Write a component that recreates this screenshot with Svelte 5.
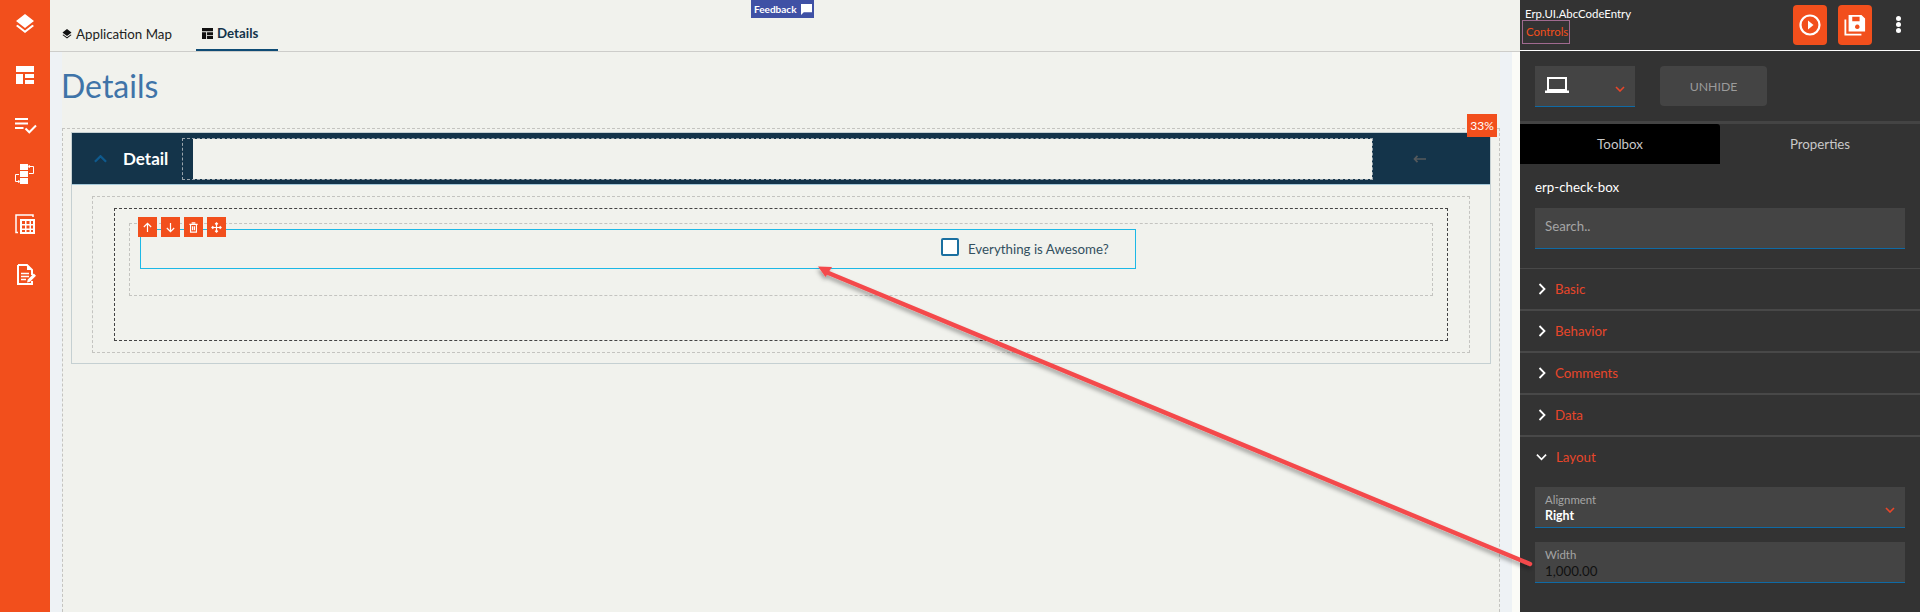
<script lang="ts">
	const sections = ['Basic', 'Behavior', 'Comments', 'Data'];
	const layers =
		'M11.99 18.54l-7.37-5.73L3 14.07l9 7 9-7-1.63-1.27-7.38 5.74zM12 16l7.36-5.73L21 9l-9-7-9 7 1.63 1.27L12 16z';
</script>

<div class="page">
	<nav class="rail">
		<svg class="r1" viewBox="0 0 24 24"><path d={layers} /></svg>
		<svg class="r2" viewBox="0 0 18 18">
			<path d="M0 0h18v6H0zM0 8h7v10H0zM9 8h9v4H9zM9 14h9v4H9z" />
		</svg>
		<svg class="r3" viewBox="0 0 22 16">
			<path d="M0 0h13v2H0zM0 4.500h13v2H0zM0 9h8.500v2H0z" />
			<path d="M10.500 10.500l3.800 3.800L21 7.500" fill="none" stroke="#fff" stroke-width="2" />
		</svg>
		<svg class="r4" viewBox="0 0 20 20">
			<path d="M5 0h8v6H5zM5 7h8v6H5zM5 14h8v6H5z" />
			<path d="M14 2.500h4.500v7H14M4 10.500H.5v7H4" fill="none" stroke="#fff" stroke-width="1" />
			<path d="M14.500 1v3l-1.500-1.500zM3.500 16v3l1.500-1.500z" stroke="#fff" stroke-width=".5" />
		</svg>
		<svg class="r5" viewBox="0 0 20 20">
			<path d="M5 5h15v15H5z M7 7v3h3V7z M11.500 7v3h3V7z M16 7v3h2V7z M7 11.500v3h3v-3z M11.500 11.500v3h3v-3z M16 11.500v3h2v-3z M7 16v2h3v-2z M11.500 16v2h3v-2z M16 16v2h2v-2z" fill-rule="evenodd" />
			<path d="M3 18.500H1V1h17v2" fill="none" stroke="#fff" stroke-width="1.500" />
		</svg>
		<svg class="r6" viewBox="0 0 19 21">
			<path d="M1 1h9l5 5v5M15 17v3H1V1" fill="none" stroke="#fff" stroke-width="2" />
			<path d="M10 1v5h5z" />
			<path d="M4 9.500h8M4 12.500h8M4 15.500h5" stroke="#fff" stroke-width="1.600" />
			<path d="M10 18.500l.8-3 6-6 2.200 2.200-6 6z" />
		</svg>
	</nav>

	<main class="main">
		<header class="tabs">
			<a class="tab first">
				<svg class="tab-ic" viewBox="0 0 24 24"><path d={layers} /></svg>
				Application Map
			</a>
			<a class="tab active">
				<svg class="tab-ic grid-ic" viewBox="0 0 12 12">
					<path d="M0 0h12v3.500H0zM0 4.500h4.500V12H0zM5.500 4.500H12v3H5.500zM5.500 8.500H12V12H5.500z" />
				</svg>
				Details
			</a>
			<div class="feedback">
				Feedback
				<svg viewBox="0 0 12 12"><path d="M0 0h12v9H3L0 12z" /></svg>
			</div>
		</header>

		<div class="body">
			<div class="strip"></div>
			<section class="content">
				<h1>Details</h1>
				<div class="outer">
					<span class="pct">33%</span>
					<div class="card">
						<div class="card-head">
							<svg class="chev-up" viewBox="0 0 14 8"><path d="M1 7l6-6 6 6" /></svg>
							<span class="card-title">Detail</span>
							<div class="head-slot"><div class="head-fill"></div></div>
							<svg class="back" viewBox="0 0 13 8"><path d="M13 4H2M4.500 .8L1.500 4l3 3.200" /></svg>
						</div>
						<div class="card-body">
							<div class="dash-a">
								<div class="dash-b">
									<div class="dash-c">
										<div class="selected">
											<div class="tools">
												<span class="tool">
													<svg viewBox="0 0 12 12"><path d="M6 11V2M2 5.500L6 1.500l4 4" /></svg>
												</span>
												<span class="tool">
													<svg viewBox="0 0 12 12"><path d="M6 1v9M2 6.500l4 4 4-4" /></svg>
												</span>
												<span class="tool">
													<svg viewBox="0 0 12 12">
														<path d="M1.500 2.500h9M4 1h4M2.800 2.500v8.500h6.400V2.500M5 4.500V9M7 4.500V9" />
													</svg>
												</span>
												<span class="tool">
													<svg viewBox="0 0 12 12">
														<path d="M6 1v10M1 6h10M4.500 2.500L6 1l1.500 1.500M4.500 9.500L6 11l1.500-1.500M2.500 4.500L1 6l1.500 1.500M9.500 4.500L11 6 9.500 7.500" />
													</svg>
												</span>
											</div>
											<label class="check">
												<span class="box"></span>
												<span class="check-text">Everything is Awesome?</span>
											</label>
										</div>
									</div>
								</div>
							</div>
						</div>
					</div>
				</div>
			</section>
			<div class="strip end"></div>
			<div class="gutter"></div>
		</div>
	</main>

	<aside class="panel">
		<div class="top">
			<div class="crumbs">
				<div class="crumb-name">Erp.UI.AbcCodeEntry</div>
				<div class="crumb-link">Controls</div>
			</div>
			<button class="act">
				<svg viewBox="0 0 22 22">
					<circle cx="11" cy="11" r="9.500" fill="none" stroke="#fff" stroke-width="2.200" />
					<path d="M9 6.500l5.500 4.500L9 15.500z" fill="#fff" />
				</svg>
			</button>
			<button class="act">
				<svg viewBox="0 0 24 24">
					<path d="M5 1h14l4 4v14H5z M9 3v5h8V3z M14.500 11.500a2.500 2.500 0 1 0 .01 0z" fill="#fff" fill-rule="evenodd" />
					<path d="M1.500 6v16.500H19" fill="none" stroke="#fff" stroke-width="2" />
				</svg>
			</button>
			<span class="kebab"><i></i><i></i><i></i></span>
		</div>

		<div class="tools-row">
			<div class="device">
				<svg class="laptop" viewBox="0 0 24 16">
					<path d="M3 1h18v12H3z" fill="none" stroke="#fff" stroke-width="2" />
					<path d="M0 13.500h24V16H0z" fill="#fff" />
				</svg>
				<svg class="mini-chev" viewBox="0 0 10 6"><path d="M1 1l4 4 4-4" /></svg>
			</div>
			<button class="unhide">UNHIDE</button>
		</div>

		<div class="panel-tabs">
			<div class="ptab on">Toolbox</div>
			<div class="ptab">Properties</div>
		</div>

		<div class="picked">erp-check-box</div>
		<div class="search">Search..</div>

		<div class="rows">
			{#each sections as s}
				<div class="row">
					<svg class="arrow" viewBox="0 0 8 12"><path d="M1.500 1l5 5-5 5" /></svg>
					<span>{s}</span>
				</div>
			{/each}
			<div class="row open">
				<svg class="arrow down" viewBox="0 0 12 8"><path d="M1 1.500l5 5 5-5" /></svg>
				<span>Layout</span>
			</div>
		</div>

		<div class="field">
			<small>Alignment</small>
			<b>Right</b>
			<svg class="mini-chev" viewBox="0 0 10 6"><path d="M1 1l4 4 4-4" /></svg>
		</div>
		<div class="field">
			<small>Width</small>
			<em>1,000.00</em>
		</div>
	</aside>

	<svg class="callout" viewBox="0 0 1920 612">
		<defs>
			<filter id="sh" x="-5%" y="-5%" width="110%" height="115%">
				<feDropShadow dx="-1" dy="3" stdDeviation="2" flood-color="#000" flood-opacity="0.35" />
			</filter>
		</defs>
		<g filter="url(#sh)">
			<path d="M1530 564L826 272" stroke="#f44a4c" stroke-width="4.500" stroke-linecap="round" />
			<path d="M818 266.500L832 267L825.500 277z" fill="#f44a4c" />
		</g>
	</svg>
</div>

<style>
	:global(body) {
		margin: 0;
		font-family: Lato, 'Liberation Sans', sans-serif;
	}
	.page {
		position: relative;
		display: grid;
		grid-template-columns: 50px 1fr 400px;
		width: 1920px;
		height: 612px;
		overflow: hidden;
		background: #f1f2ed;
	}
	.rail {
		background: #f24f1c;
		display: flex;
		flex-direction: column;
		align-items: center;
	}
	.rail svg {
		fill: #fff;
		flex: none;
	}
	.r1 {
		width: 24px;
		height: 24px;
		margin-top: 12px;
	}
	.r2 {
		width: 18px;
		height: 18px;
		margin-top: 30px;
	}
	.r3 {
		width: 22px;
		height: 16px;
		margin-top: 34px;
		margin-left: 2px;
	}
	.r4 {
		width: 20px;
		height: 20px;
		margin-top: 30px;
	}
	.r5 {
		width: 20px;
		height: 20px;
		margin-top: 30px;
	}
	.r6 {
		width: 19px;
		height: 21px;
		margin-top: 30px;
		margin-left: 2px;
	}
	.main {
		display: flex;
		flex-direction: column;
		min-width: 0;
	}
	.tabs {
		position: relative;
		flex: none;
		display: flex;
		align-items: flex-end;
		height: 51px;
		border-bottom: 1px solid #cdcdca;
		padding-left: 11px;
	}
	.tab {
		display: flex;
		align-items: center;
		gap: 3px;
		height: 34px;
		font-size: 13.3px;
		color: #222;
		box-sizing: border-box;
		padding-bottom: 1px;
	}
	.tab.first {
		width: 135px;
	}
	.tab.active {
		width: 82px;
		padding-left: 6px;
		color: #14344a;
		font-weight: 700;
		border-bottom: 2px solid #0f4c75;
		padding-bottom: 0;
	}
	.tab-ic {
		width: 12px;
		height: 12px;
		fill: #111;
	}
	.grid-ic {
		width: 11px;
		height: 11px;
		margin-right: 1px;
	}
	.feedback {
		position: absolute;
		left: 701px;
		top: 0;
		width: 63px;
		height: 18px;
		background: #3f51a5;
		color: #fff;
		font-size: 10px;
		font-weight: 700;
		display: flex;
		align-items: center;
		gap: 5px;
		padding-left: 3px;
		box-sizing: border-box;
	}
	.feedback svg {
		width: 11px;
		height: 11px;
		fill: #fff;
	}
	.body {
		flex: 1;
		display: flex;
		min-height: 0;
	}
	.strip {
		flex: none;
		width: 12px;
		background: #eef2f5;
	}
	.gutter {
		flex: none;
		width: 8px;
		background: #fbfbf7;
	}
	.content {
		flex: 1;
		min-width: 0;
		display: flex;
		flex-direction: column;
	}
	h1 {
		margin: 0 0 0 -1px;
		height: 76px;
		flex: none;
		box-sizing: border-box;
		padding-top: 15px;
		font-size: 32px;
		line-height: 38px;
		font-weight: 400;
		color: #3f74a8;
	}
	.outer {
		position: relative;
		flex: 1;
		margin-bottom: -20px;
		border: 1px dashed #c4c4c0;
		padding: 3px 8px 0 8px;
		box-sizing: border-box;
	}
	.pct {
		position: absolute;
		top: -15px;
		right: 2px;
		width: 30px;
		height: 23px;
		background: #f24f1c;
		color: #fff;
		font-size: 12px;
		line-height: 23px;
		text-align: center;
		z-index: 2;
	}
	.card {
		height: 232px;
		box-sizing: border-box;
		border: 1px solid #c5d0d2;
		display: flex;
		flex-direction: column;
	}
	.card-head {
		flex: none;
		display: flex;
		align-items: center;
		height: 52px;
		box-sizing: border-box;
		background: #14344a;
		border-bottom: 1px solid #a5c8d8;
		position: relative;
	}
	.chev-up {
		width: 13px;
		height: 8px;
		margin-left: 22px;
		fill: none;
		stroke: #0f5a8e;
		stroke-width: 2.400;
	}
	.card-title {
		margin-left: 16px;
		width: 59px;
		font-size: 17px;
		font-weight: 700;
		color: #fff;
	}
	.head-slot {
		flex: none;
		width: 1191px;
		height: 42px;
		margin-top: 1px;
		box-sizing: border-box;
		border: 1px dashed #9aa5ac;
		padding-left: 10px;
	}
	.head-fill {
		height: 100%;
		background: #f1f2ed;
	}
	.back {
		width: 13px;
		height: 8px;
		margin-left: 40px;
		fill: none;
		stroke: #55595c;
		stroke-width: 1.700;
	}
	.card-body {
		flex: 1;
		padding: 11px 20px 10px 20px;
		display: flex;
	}
	.dash-a {
		flex: 1;
		border: 1px dashed #c4c4c0;
		padding: 11px 21px;
		display: flex;
	}
	.dash-b {
		flex: 1;
		border: 1px dashed #444;
		padding: 14px 14px 0 14px;
	}
	.dash-c {
		height: 73px;
		box-sizing: border-box;
		border: 1px dashed #c4c4c0;
		padding: 5px 0 0 10px;
	}
	.selected {
		position: relative;
		width: 996px;
		height: 40px;
		box-sizing: border-box;
		border: 1px solid #1cb8e6;
	}
	.tools {
		position: absolute;
		left: -3px;
		top: -13px;
		display: flex;
		gap: 4px;
	}
	.tool {
		width: 19px;
		height: 20px;
		background: #f24f1c;
		display: flex;
		align-items: center;
		justify-content: center;
	}
	.tool svg {
		width: 11px;
		height: 11px;
		fill: none;
		stroke: #fff;
		stroke-width: 1.300;
	}
	.check {
		position: absolute;
		left: 800px;
		top: 7px;
		display: flex;
		align-items: center;
		gap: 9px;
		font-size: 13.3px;
		color: #33505f;
	}
	.check-text {
		padding-top: 4px;
	}
	.box {
		width: 18px;
		height: 18px;
		box-sizing: border-box;
		border: 2px solid #1a6fa0;
		border-radius: 2px;
		background: #fff;
	}
	.panel {
		background: #333;
		display: flex;
		flex-direction: column;
		color: #fff;
	}
	.top {
		flex: none;
		height: 51px;
		box-sizing: border-box;
		border-bottom: 1px solid #fff;
		display: flex;
		align-items: flex-start;
		padding: 5px 0 0 2px;
	}
	.crumbs {
		width: 271px;
	}
	.crumb-name {
		font-size: 11.4px;
		line-height: 15px;
		padding: 1px 0 0 3px;
	}
	.crumb-link {
		width: 48px;
		height: 24px;
		box-sizing: border-box;
		border: 1px solid #a06a90;
		font-size: 11.4px;
		line-height: 21px;
		padding-left: 3px;
		color: #f24f1c;
		margin-top: -1px;
	}
	.act {
		width: 34px;
		height: 40px;
		padding: 0;
		border: 0;
		border-radius: 4px;
		background: #f24f1c;
		margin-right: 11px;
		display: flex;
		align-items: center;
		justify-content: center;
	}
	.act svg {
		width: 22px;
		height: 22px;
	}
	.kebab {
		display: flex;
		flex-direction: column;
		gap: 1px;
		margin: 11px 0 0 13px;
	}
	.kebab i {
		width: 5px;
		height: 5px;
		border-radius: 50%;
		background: #fff;
	}
	.tools-row {
		flex: none;
		height: 73px;
		box-sizing: border-box;
		display: flex;
		gap: 25px;
		padding: 15px 0 0 15px;
		border-bottom: 3px solid #444;
	}
	.device {
		position: relative;
		width: 100px;
		height: 41px;
		box-sizing: border-box;
		background: #444;
		border-bottom: 1px solid #0f6aa5;
	}
	.laptop {
		position: absolute;
		left: 10px;
		top: 11px;
		width: 24px;
		height: 16px;
	}
	.mini-chev {
		position: absolute;
		right: 10px;
		top: 20px;
		width: 10px;
		height: 6px;
		fill: none;
		stroke: #e8462a;
		stroke-width: 1.600;
	}
	.unhide {
		width: 107px;
		height: 40px;
		border: 0;
		border-radius: 4px;
		background: #444;
		color: #9b9b9b;
		font-family: inherit;
		font-size: 12.3px;
	}
	.panel-tabs {
		flex: none;
		display: flex;
		height: 40px;
	}
	.ptab {
		flex: 1;
		font-size: 13.3px;
		line-height: 40px;
		text-align: center;
		color: #c8c8c8;
	}
	.ptab.on {
		background: #000;
		border-top-right-radius: 3px;
	}
	.picked {
		flex: none;
		font-size: 13.3px;
		padding: 15px 0 0 15px;
		height: 44px;
		box-sizing: border-box;
	}
	.search {
		flex: none;
		margin: 0 15px;
		height: 41px;
		box-sizing: border-box;
		background: #444;
		border-bottom: 1px solid #0f6aa5;
		padding: 10px 0 0 10px;
		font-size: 13.3px;
		color: #a5a5a5;
	}
	.rows {
		flex: none;
		margin-top: 19px;
		border-top: 1px solid #484848;
	}
	.row {
		height: 42px;
		box-sizing: border-box;
		display: flex;
		align-items: center;
		padding-left: 18px;
		border-bottom: 2px solid #484848;
		font-size: 13.3px;
		color: #e8462a;
	}
	.row span {
		margin-left: 9px;
	}
	.row.open {
		height: 41px;
		border-bottom: 0;
		padding-left: 16px;
		padding-bottom: 2px;
	}
	.arrow {
		width: 8px;
		height: 12px;
		fill: none;
		stroke: #fff;
		stroke-width: 1.800;
	}
	.arrow.down {
		width: 11px;
		height: 8px;
	}
	.field {
		flex: none;
		position: relative;
		margin: 9px 15px 5px;
		height: 41px;
		box-sizing: border-box;
		background: #444;
		border-bottom: 1px solid #0f6aa5;
		padding: 5px 10px 0;
		display: flex;
		flex-direction: column;
	}
	.field small {
		font-size: 11.4px;
		line-height: 15px;
		color: #a5a5a5;
	}
	.field b {
		font-size: 12.4px;
		line-height: 18px;
		font-weight: 700;
		color: #fff;
	}
	.field em {
		font-style: normal;
		font-size: 13.3px;
		line-height: 19px;
		color: #111;
	}
	.callout {
		position: absolute;
		inset: 0;
		width: 1920px;
		height: 612px;
		pointer-events: none;
	}
</style>
